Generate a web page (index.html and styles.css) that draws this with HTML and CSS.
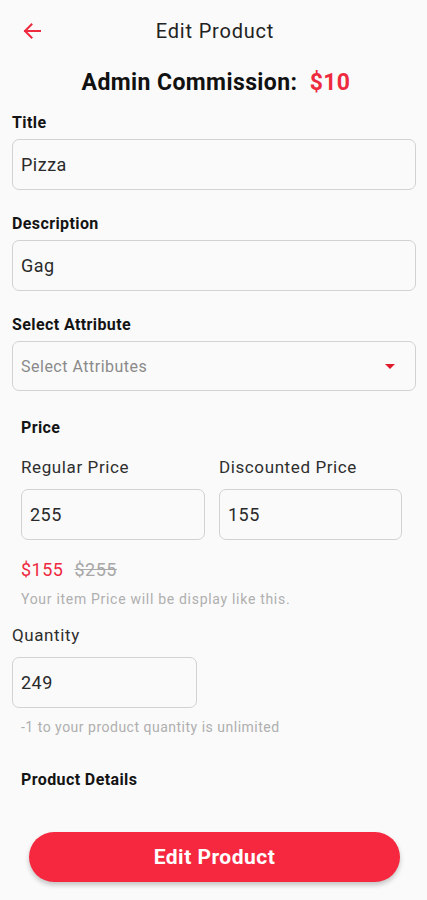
FILE: index.html
```html
<!DOCTYPE html>
<html>
<head>
<meta charset="utf-8">
<link rel="stylesheet" href="styles.css">
</head>
<body>
<div class="screen">
  <header class="appbar">
    <svg class="back" width="18" height="16" viewBox="0 0 18 16"><path d="M17 8H2M8.5 1.5L2 8l6.5 6.5" fill="none" stroke="#ee2a3f" stroke-width="2" stroke-linecap="square"/></svg>
    <div class="appbar-title">Edit Product</div>
  </header>
  <div class="commission">Admin Commission:&nbsp; <span class="red">$10</span></div>

  <div class="label first">Title</div>
  <div class="field"><span class="value">Pizza</span></div>

  <div class="label">Description</div>
  <div class="field"><span class="value">Gag</span></div>

  <div class="label">Select Attribute</div>
  <div class="field select"><span class="placeholder">Select Attributes</span><span class="caret"></span></div>

  <div class="price-section">
    <div class="label price-title">Price</div>
    <div class="price-grid">
      <div class="col">
        <div class="sub-label">Regular Price</div>
        <div class="field small"><span class="value">255</span></div>
      </div>
      <div class="col">
        <div class="sub-label">Discounted Price</div>
        <div class="field small"><span class="value">155</span></div>
      </div>
    </div>
    <div class="preview"><span class="red">$155</span><span class="strike">$255</span></div>
    <div class="hint">Your item Price will be display like this.</div>
  </div>

  <div class="sub-label qty-label">Quantity</div>
  <div class="field qty"><span class="value">249</span></div>
  <div class="hint indent">-1 to your product quantity is unlimited</div>

  <div class="label details">Product Details</div>

  <div class="btn">Edit Product</div>
</div>
</body>
</html>
```
FILE: styles.css
```css
* { box-sizing: border-box; }
html, body { margin: 0; padding: 0; }
body {
  background: #fafafa;
  font-family: Roboto, "Liberation Sans", sans-serif;
  color: #1a1a1a;
}
.screen {
  width: 427px;
  min-height: 900px;
  padding: 0 11px 0 12px;
  display: flex;
  flex-direction: column;
}
.screen > * { flex-shrink: 0; }
.appbar {
  height: 62px;
  position: relative;
  display: flex;
  align-items: center;
  justify-content: center;
}
.back {
  position: absolute;
  left: 11px;
  top: 23px;
}
.appbar-title {
  font-size: 20px;
  letter-spacing: 0.8px;
  color: #222;
  margin-left: 2px;
}
.commission {
  margin-top: 9px;
  line-height: 24px;
  font-size: 23px;
  letter-spacing: 0.4px;
  font-weight: 700;
  text-align: center;
  color: #111;
  margin-left: 4px;
}
.red { color: #ee2a3f; }
.label {
  font-size: 16px;
  letter-spacing: 0.4px;
  font-weight: 700;
  line-height: 18px;
  margin-top: 25px;
  margin-bottom: 7px;
  color: #141414;
}
.label.first { margin-top: 19px; }
.field {
  height: 51px;
  border: 1px solid #d2d2d2;
  border-radius: 7px;
  background: #fafafa;
  display: flex;
  align-items: center;
  padding: 0 8px;
}
.field.select { height: 50px; justify-content: space-between; padding-right: 20px; }
.value { font-size: 18px; letter-spacing: 0.5px; color: #2a2a2a; }
.placeholder { font-size: 16px; letter-spacing: 0.5px; color: #8a8a8a; }
.caret {
  width: 0; height: 0;
  border-left: 5px solid transparent;
  border-right: 5px solid transparent;
  border-top: 5px solid #e01b2e;
}
.price-section { padding: 0 14px 0 9px; }
.price-title { margin-top: 28px; margin-bottom: 0; }
.price-grid {
  display: grid;
  grid-template-columns: 184px 183px;
  gap: 14px;
  margin-top: 20px;
}
.sub-label {
  font-size: 17px;
  letter-spacing: 0.6px;
  line-height: 20px;
  color: #2e2e2e;
  margin-bottom: 12px;
}
.preview {
  margin-top: 20px;
  font-size: 18px;
  letter-spacing: 0.5px;
  line-height: 20px;
  display: flex;
  gap: 11px;
}
.strike { color: #a8a8a8; text-decoration: line-through; }
.hint {
  margin-top: 11px;
  font-size: 14px;
  letter-spacing: 0.7px;
  line-height: 16px;
  color: #afafaf;
}
.qty-label { margin-top: 18px; }
.field.qty { width: 185px; }
.hint.indent { margin-left: 9px; letter-spacing: 0.5px; }
.details { margin-top: 35px; margin-bottom: 0; margin-left: 9px; font-size: 16px; line-height: 20px; }
.btn {
  margin: 42px 16px 0 17px;
  height: 50px;
  border-radius: 25px;
  background: #f5283f;
  color: #fff;
  font-size: 21px;
  letter-spacing: 0.5px;
  font-weight: 700;
  display: flex;
  align-items: center;
  justify-content: center;
  box-shadow: 0 3px 5px rgba(0,0,0,0.22);
}
```
